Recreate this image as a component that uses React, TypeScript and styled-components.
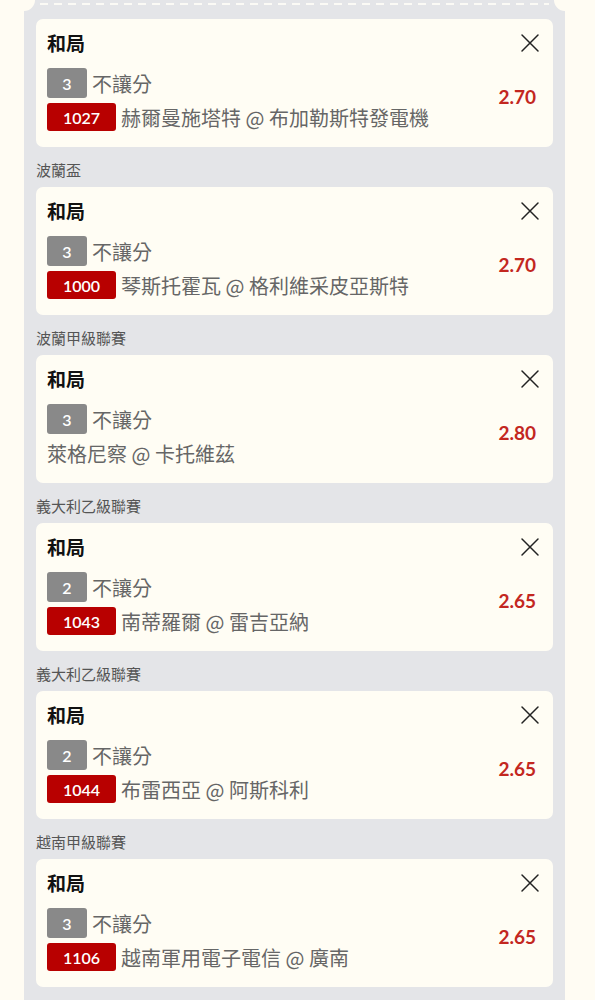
import React from "react";
import styled, { createGlobalStyle } from "styled-components";

const Global = createGlobalStyle`
  html, body { margin: 0; padding: 0; background: #fffcf3; }
  body { font-family: Lato, "Noto Sans CJK TC", sans-serif; }
`;

const Page = styled.div`
  width: 595px;
  height: 1000px;
  overflow: hidden;
  background: #fffcf3;
`;

const Panel = styled.div`
  margin: 0 30px 0 24px;
  background: #e4e5e8;
  padding: 0 12px 40px;
`;

const Divider = styled.div`
  position: relative;
  height: 19px;
  margin: 0 -12px;
  &::before, &::after {
    content: "";
    position: absolute;
    top: -11px;
    width: 22px;
    height: 22px;
    border-radius: 50%;
    background: #fffcf3;
  }
  &::before { left: -11px; }
  &::after { right: -11px; }
`;

const Dashes = styled.div`
  position: absolute;
  top: 3px;
  left: 16px;
  right: 16px;
  height: 2px;
  background: repeating-linear-gradient(90deg, #fbfaf5 0 8px, transparent 8px 14px);
`;

const League = styled.div`
  height: 40px;
  box-sizing: border-box;
  padding-top: 5px;
  display: flex;
  align-items: center;
  font-family: "Noto Sans CJK TC", sans-serif;
  font-size: 15px;
  color: #555;
`;

const Card = styled.div`
  background: #fffdf4;
  border-radius: 7px;
  height: 128px;
  box-sizing: border-box;
  padding: 12px 17px 0 11px;
  display: grid;
  grid-template-columns: 1fr auto;
  grid-template-rows: 24px auto;
  row-gap: 13px;
`;

const Title = styled.div`
  font-family: "Noto Sans CJK TC", sans-serif;
  font-weight: 700;
  font-size: 19px;
  line-height: 24px;
  color: #111;
`;

const Close = styled.button`
  all: unset;
  width: 20px;
  height: 20px;
  display: flex;
  align-items: center;
  justify-content: center;
  justify-self: end;
  margin: 2px -4px 0 0;
`;

const Rows = styled.div`
  display: flex;
  flex-direction: column;
  gap: 5px;
`;

const Row = styled.div<{ $h: number }>`
  display: flex;
  align-items: center;
  gap: 5px;
  height: ${(p) => p.$h}px;
`;

const Badge = styled.span<{ $red?: boolean }>`
  display: inline-flex;
  align-items: center;
  justify-content: center;
  box-sizing: border-box;
  width: ${(p) => (p.$red ? 69 : 40)}px;
  height: ${(p) => (p.$red ? 28 : 30)}px;
  border-radius: 3px;
  background: ${(p) => (p.$red ? "#b80000" : "#898989")};
  color: #fff;
  font-family: Lato, sans-serif;
  font-size: 16px;
  font-weight: 600;
`;

const Label = styled.span`
  font-family: "Noto Sans CJK TC", sans-serif;
  font-size: 20px;
  color: #666;
  white-space: nowrap;
`;

const Odds = styled.div`
  align-self: center;
  margin-top: -22px;
  font-family: Lato, sans-serif;
  font-weight: 700;
  font-size: 19px;
  color: #c3271f;
`;

type Bet = { league?: string; num: string; code?: string; match: string; odds: string };

const bets: Bet[] = [
  { num: "3", code: "1027", match: "赫爾曼施塔特 @ 布加勒斯特發電機", odds: "2.70" },
  { league: "波蘭盃", num: "3", code: "1000", match: "琴斯托霍瓦 @ 格利維采皮亞斯特", odds: "2.70" },
  { league: "波蘭甲級聯賽", num: "3", match: "萊格尼察 @ 卡托維茲", odds: "2.80" },
  { league: "義大利乙級聯賽", num: "2", code: "1043", match: "南蒂羅爾 @ 雷吉亞納", odds: "2.65" },
  { league: "義大利乙級聯賽", num: "2", code: "1044", match: "布雷西亞 @ 阿斯科利", odds: "2.65" },
  { league: "越南甲級聯賽", num: "3", code: "1106", match: "越南軍用電子電信 @ 廣南", odds: "2.65" },
];

const XIcon = () => (
  <svg width="20" height="20" viewBox="0 0 20 20" fill="none" stroke="#222" strokeWidth="1.5" strokeLinecap="round">
    <path d="M2 2 L18 18 M18 2 L2 18" />
  </svg>
);

export default function App() {
  return (
    <Page>
      <Global />
      <Panel>
        <Divider>
          <Dashes />
        </Divider>
        {bets.map((b, i) => (
          <React.Fragment key={i}>
            {b.league && <League>{b.league}</League>}
            <Card>
              <Title>和局</Title>
              <Close aria-label="close">
                <XIcon />
              </Close>
              <Rows>
                <Row $h={30}>
                  <Badge>{b.num}</Badge>
                  <Label>不讓分</Label>
                </Row>
                <Row $h={28}>
                  {b.code && <Badge $red>{b.code}</Badge>}
                  <Label>{b.match}</Label>
                </Row>
              </Rows>
              <Odds>{b.odds}</Odds>
            </Card>
          </React.Fragment>
        ))}
      </Panel>
    </Page>
  );
}
